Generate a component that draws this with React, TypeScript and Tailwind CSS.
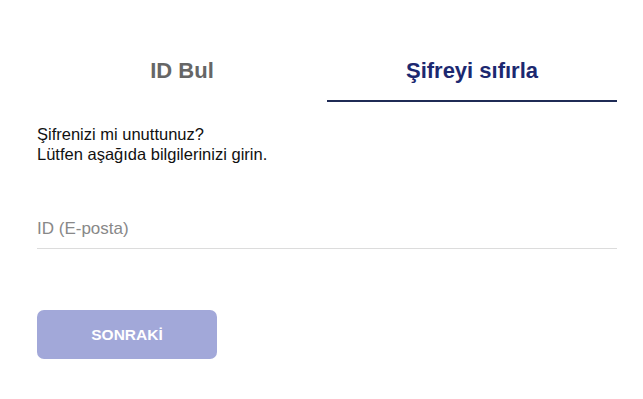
export default function App() {
  return (
    <div className="min-h-screen bg-white font-['Liberation_Sans',Arial,sans-serif]">
      <div className="w-[580px] ml-[37px] pt-[50px]">
        {/* TABS */}
        <div className="flex">
          <button className="w-1/2 h-[52px] pt-[10px] flex justify-center items-start text-[22px] leading-[22px] font-bold text-[#666666] border-b-2 border-transparent">
            ID Bul
          </button>
          <button className="w-1/2 h-[52px] pt-[10px] flex justify-center items-start text-[22px] leading-[22px] font-bold text-[#1c2870] border-b-2 border-[#1f2b55]">
            Şifreyi sıfırla
          </button>
        </div>

        <p className="mt-[22px] text-[16.5px] leading-[20px] text-[#111]">
          Şifrenizi mi unuttunuz?
          <br />
          Lütfen aşağıda bilgilerinizi girin.
        </p>

        <input
          type="text"
          placeholder="ID (E-posta)"
          className="mt-[45px] block w-full h-[40px] border-b border-[#dcdcdc] outline-none text-[17px] text-[#333] placeholder:text-[#888888]"
        />

        <button className="mt-[61px] w-[180px] h-[49px] rounded-[7px] bg-[#a2a8d9] text-white text-[15.5px] font-bold">
          SONRAKİ
        </button>
      </div>
    </div>
  );
}
